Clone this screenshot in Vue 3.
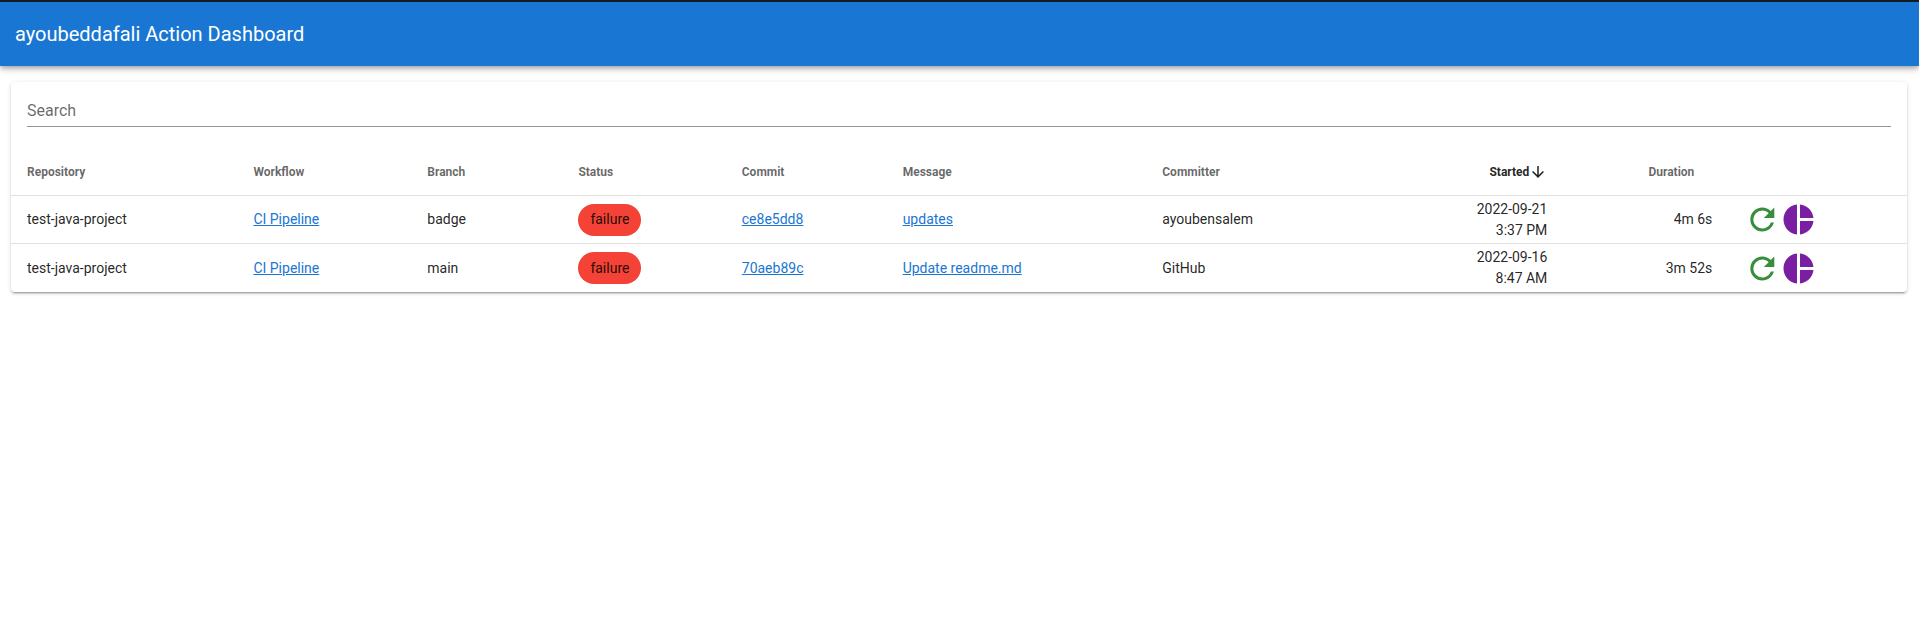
<script setup>
const columns = [
  { key: 'repo', label: 'Repository' },
  { key: 'workflow', label: 'Workflow' },
  { key: 'branch', label: 'Branch' },
  { key: 'status', label: 'Status' },
  { key: 'commit', label: 'Commit' },
  { key: 'message', label: 'Message' },
  { key: 'committer', label: 'Committer' },
  { key: 'started', label: 'Started', end: true, sorted: true },
  { key: 'duration', label: 'Duration', end: true },
  { key: 'actions', label: '' }
]

const runs = [
  { repo: 'test-java-project', workflow: 'CI Pipeline', branch: 'badge', status: 'failure', commit: 'ce8e5dd8', message: 'updates', committer: 'ayoubensalem', date: '2022-09-21', time: '3:37 PM', duration: '4m 6s' },
  { repo: 'test-java-project', workflow: 'CI Pipeline', branch: 'main', status: 'failure', commit: '70aeb89c', message: 'Update readme.md', committer: 'GitHub', date: '2022-09-16', time: '8:47 AM', duration: '3m 52s' }
]
</script>

<template>
  <div class="app">
    <header class="toolbar">
      <h1 class="title">ayoubeddafali Action Dashboard</h1>
    </header>
    <main class="card">
      <div class="search">
        <input class="search-input" type="text" placeholder="Search" aria-label="Search" />
      </div>
      <table class="runs">
        <colgroup>
          <col v-for="c in columns" :key="c.key" :class="'col-' + c.key" />
        </colgroup>
        <thead>
          <tr>
            <th v-for="c in columns" :key="c.key" :class="{ end: c.end, sorted: c.sorted }">
              <div class="head">
                <span>{{ c.label }}</span>
                <svg v-if="c.end" class="sort" viewBox="0 0 24 24"><path d="M11,4H13V16L18.5,10.5L19.92,11.92L12,19.84L4.08,11.92L5.5,10.5L11,16V4Z" /></svg>
              </div>
            </th>
          </tr>
        </thead>
        <tbody>
          <tr v-for="r in runs" :key="r.commit">
            <td>{{ r.repo }}</td>
            <td><a href="#">{{ r.workflow }}</a></td>
            <td>{{ r.branch }}</td>
            <td><span class="chip">{{ r.status }}</span></td>
            <td><a href="#">{{ r.commit }}</a></td>
            <td><a href="#">{{ r.message }}</a></td>
            <td>{{ r.committer }}</td>
            <td class="end started"><div>{{ r.date }}</div><div>{{ r.time }}</div></td>
            <td class="end">{{ r.duration }}</td>
            <td class="tools">
              <div class="actions">
                <svg class="refresh" viewBox="-0.2 -0.333 24 24"><path d="M17.65,6.35C16.2,4.9 14.21,4 12,4A8,8 0 0,0 4,12A8,8 0 0,0 12,20C15.73,20 18.84,17.45 19.73,14H17.65C16.83,16.33 14.61,18 12,18A6,6 0 0,1 6,12A6,6 0 0,1 12,6C13.66,6 15.14,6.69 16.22,7.78L13,11H20V4L17.65,6.35Z" /></svg>
                <svg class="pie" viewBox="-0.333 -0.333 24 24"><path d="M11,2V22C5.9,21.5 2,17.2 2,12C2,6.8 5.9,2.5 11,2M13,2V11H22C21.5,6.2 17.8,2.5 13,2M13,13V22C17.7,21.5 21.5,17.8 22,13H13Z" /></svg>
              </div>
            </td>
          </tr>
        </tbody>
      </table>
    </main>
  </div>
</template>

<style>
body {
  margin: 0;
  background: #fff;
}
</style>

<style scoped>
.app {
  box-sizing: border-box;
  height: 637px;
  border-top: 2px solid #121a24;
  font-family: Roboto, "Liberation Sans", sans-serif;
  color: rgba(0, 0, 0, 0.87);
  overflow: hidden;
}
.toolbar {
  display: flex;
  align-items: center;
  height: 64px;
  padding: 0 15px;
  box-sizing: border-box;
  background: #1976d2;
  box-shadow: 0 2px 4px -1px rgba(0, 0, 0, 0.2), 0 4px 5px 0 rgba(0, 0, 0, 0.14), 0 1px 10px 0 rgba(0, 0, 0, 0.12);
}
.title {
  margin: 0;
  font-size: 20px;
  font-weight: 400;
  line-height: 30px;
  color: #fff;
}
.card {
  margin: 16px 12px 0 11px;
  height: 210.4px;
  border-radius: 4px;
  background: #fff;
  box-shadow: 0 3px 1px -2px rgba(0, 0, 0, 0.2), 0 2px 2px 0 rgba(0, 0, 0, 0.14), 0 1px 5px 0 rgba(0, 0, 0, 0.12);
}
.search {
  height: 66px;
  padding: 12px 16px 0;
  box-sizing: border-box;
}
.search-input {
  display: block;
  width: 100%;
  height: 33px;
  padding: 0;
  border: 0;
  border-bottom: 1px solid #949494;
  outline: 0;
  box-sizing: border-box;
  font: 400 16px Roboto, "Liberation Sans", sans-serif;
  background: transparent;
}
.search-input::placeholder {
  color: rgba(0, 0, 0, 0.6);
  opacity: 1;
}
.runs {
  width: 100%;
  table-layout: fixed;
  border-spacing: 0;
}
.col-repo { width: 226.4px; }
.col-workflow { width: 173.9px; }
.col-branch { width: 151.1px; }
.col-status { width: 163.4px; }
.col-commit { width: 160.9px; }
.col-message { width: 259.6px; }
.col-committer { width: 280.1px; }
.col-started { width: 137px; }
.col-duration { width: 165px; }
th {
  height: 48px;
  padding: 0 16px;
  box-sizing: border-box;
  border-bottom: 1px solid rgba(0, 0, 0, 0.12);
  font-size: 12px;
  font-weight: 700;
  line-height: 18px;
  white-space: nowrap;
  color: rgba(0, 0, 0, 0.6);
}
.head {
  display: flex;
  align-items: center;
  height: 18px;
}
.end .head { justify-content: flex-end; }
td.end { text-align: right; }
th.sorted { color: rgba(0, 0, 0, 0.87); }
.sort {
  width: 18px;
  height: 18px;
  fill: currentColor;
  opacity: 0;
}
.sorted .sort { opacity: 1; }
td {
  height: 48px;
  padding: 0 16px;
  box-sizing: border-box;
  font-size: 14px;
  line-height: 21px;
  white-space: nowrap;
}
tbody tr:not(:last-child) td { border-bottom: 1px solid rgba(0, 0, 0, 0.12); }
a { color: #1976d2; }
.chip {
  display: inline-flex;
  align-items: center;
  height: 32px;
  padding: 0 12px;
  border-radius: 16px;
  background: #f44336;
  vertical-align: middle;
}
td.tools {
  padding-top: 5px;
  vertical-align: top;
}
tbody tr:last-child .tools { padding-top: 6px; }
.actions {
  display: flex;
}
.actions svg {
  width: 36px;
  height: 36px;
}
.refresh { fill: #388e3c; }
.pie { fill: #7b1fa2; }
</style>
